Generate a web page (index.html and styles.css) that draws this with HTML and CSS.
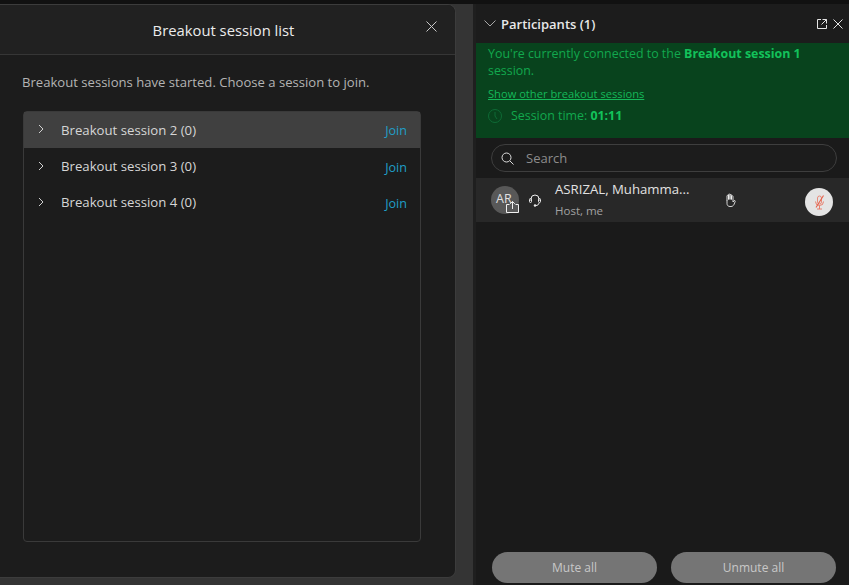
FILE: index.html
```html
<!DOCTYPE html>
<html lang="en">
<head>
    <meta charset="UTF-8">
    <meta name="viewport" content="width=device-width, initial-scale=1.0">
    <title>Breakout session list</title>
    <link rel="stylesheet" href="styles.css">
</head>
<body>
    <div class="app">
        <div class="left-side">
            <div class="dialog">
                <div class="dialog-head">
                    <h2>Breakout session list</h2>
                    <button class="dialog-close" aria-label="Close">
                        <svg width="11" height="11" viewBox="0 0 11 11"><path d="M.5.5l10 10M10.500.5l-10 10" stroke="#c8c8c8" fill="none"/></svg>
                    </button>
                </div>
                <div class="dialog-body">
                    <p class="intro">Breakout sessions have started. Choose a session to join.</p>
                    <div class="session-list">
                        <div class="session-row active">
                            <svg class="chev" width="6" height="10" viewBox="0 0 6 10"><path d="M1 1l4 4-4 4" stroke="#d0d0d0" fill="none"/></svg>
                            <span class="session-name">Breakout session 2 (0)</span>
                            <a class="join">Join</a>
                        </div>
                        <div class="session-row">
                            <svg class="chev" width="6" height="10" viewBox="0 0 6 10"><path d="M1 1l4 4-4 4" stroke="#d0d0d0" fill="none"/></svg>
                            <span class="session-name">Breakout session 3 (0)</span>
                            <a class="join">Join</a>
                        </div>
                        <div class="session-row">
                            <svg class="chev" width="6" height="10" viewBox="0 0 6 10"><path d="M1 1l4 4-4 4" stroke="#d0d0d0" fill="none"/></svg>
                            <span class="session-name">Breakout session 4 (0)</span>
                            <a class="join">Join</a>
                        </div>
                    </div>
                </div>
            </div>
        </div>

        <div class="participants">
            <div class="panel-head">
                <svg width="12" height="7" viewBox="0 0 12 7"><path d="M.5.5L6 6 11.5.5" stroke="#a8a8a8" fill="none"/></svg>
                <span class="panel-title">Participants (1)</span>
                <svg class="popout" width="10" height="10" viewBox="0 0 10 10"><path d="M4 .5H.5v9h9V6M5.500.5h4v4M9.500.5L4.500 5.500" stroke="#e4e4e4" fill="none"/></svg>
                <svg width="10" height="10" viewBox="0 0 10 10"><path d="M.5.5l9 9M9.500.5l-9 9" stroke="#e4e4e4" fill="none"/></svg>
            </div>
            <div class="banner">
                <p>You're currently connected to the <b>Breakout session 1</b> session.</p>
                <a class="banner-link">Show other breakout sessions</a>
                <div class="timer">
                    <svg width="14" height="14" viewBox="0 0 14 14"><circle cx="7" cy="7" r="6.500" stroke="#0f6b36" fill="none"/><path d="M7 3v4l2 3" stroke="#0f6b36" fill="none"/></svg>
                    <span>Session time: <b>01:11</b></span>
                </div>
            </div>
            <div class="search">
                <svg width="13" height="13" viewBox="0 0 13 13"><circle cx="5.500" cy="5.500" r="4.500" stroke="#dcdcdc" fill="none"/><path d="M9 9l3.500 3.500" stroke="#dcdcdc" fill="none"/></svg>
                <span>Search</span>
            </div>
            <div class="person">
                <div class="avatar">
                    <span class="initials">AR</span>
                    <svg class="share-badge" width="13" height="13" viewBox="0 0 13 13"><path d="M3.500 4.500H.5v8h12v-8h-3" stroke="#f0f0f0" fill="#585858"/><path d="M6.500 9V1.500M4.200 3.800l2.300-2.300 2.300 2.300" stroke="#f0f0f0" fill="none"/></svg>
                </div>
                <svg class="headset" width="12" height="13" viewBox="0 0 12 13"><path d="M2 7V5a4 4 0 0 1 8 0v2" stroke="#ececec" fill="none"/><rect x=".5" y="4.500" width="2" height="4" rx="1" stroke="#ececec" fill="none"/><rect x="9.500" y="4.500" width="2" height="4" rx="1" stroke="#ececec" fill="none"/><path d="M10 9c0 1.500-1.500 2.500-3 2.500" stroke="#ececec" fill="none"/><circle cx="6" cy="11.500" r="1.200" fill="#ececec"/></svg>
                <div class="person-text">
                    <div class="person-name">ASRIZAL, Muhamma...</div>
                    <div class="person-role">Host, me</div>
                </div>
                <svg class="hand" width="12" height="14" viewBox="0 0 12 14"><path d="M3 7.500V3a.75.75 0 0 1 1.500 0v3.500M4.500 6.500V1.750a.75.75 0 0 1 1.500 0V6.500M6 6.500V2.250a.75.75 0 0 1 1.500 0V6.500M7.500 6.500V3.500a.75.75 0 0 1 1.500 0V9l1-1.200c.6-.7 1.600 0 1.200.7L10 11.500c-.7 1.200-1.500 2-3 2H6c-2 0-3-1.300-3-3V7" stroke="#f4f4f4" stroke-width=".85" fill="none"/></svg>
                <div class="mic-btn">
                    <svg width="11" height="15" viewBox="0 0 11 15"><rect x="3.500" y="1" width="4" height="8" rx="2" stroke="#e8735f" stroke-width=".8" fill="none"/><path d="M1.500 6.500a4 4 0 0 0 8 0M5.500 10.500V14M3 14h5" stroke="#e8735f" stroke-width=".9" fill="none"/><path d="M9.500.5L2 12.500" stroke="#e4604a" stroke-width="1.100" fill="none"/></svg>
                </div>
            </div>
            <div class="panel-foot">
                <button class="pill">Mute all</button>
                <button class="pill">Unmute all</button>
            </div>
        </div>
    </div>
</body>
</html>
```

FILE: styles.css
```css
* {
    box-sizing: border-box;
}

html, body {
    height: 100%;
}

body {
    margin: 0;
    font-family: "Open Sans", "Noto Sans", sans-serif;
    background-color: #111111;
    overflow: hidden;
}

.app {
    display: flex;
    height: 585px;
    padding-top: 4px;
}

.left-side {
    width: 476px;
    padding-right: 17px;
    padding-bottom: 7px;
    border-right: 3px solid #1f1f1f;
    background-color: #343434;
    display: flex;
    flex-direction: column;
}

.dialog {
    flex: 1;
    display: flex;
    flex-direction: column;
    background-color: #1c1c1c;
    border: 1px solid #3c3c3c;
    border-left: none;
    border-radius: 0 8px 8px 0;
}

.dialog-head {
    height: 50px;
    display: flex;
    align-items: center;
    justify-content: center;
    position: relative;
    background-color: #212121;
    border-bottom: 1px solid #363636;
    border-radius: 0 8px 0 0;
}

.dialog-head h2 {
    margin: 0 8px 0 0;
    font-size: 14.8px;
    font-weight: 400;
    color: #ececec;
}

.dialog-close {
    position: absolute;
    right: 18px;
    top: 16px;
    padding: 0;
    width: 11px;
    height: 11px;
    display: flex;
    background: none;
    border: none;
}

.dialog-body {
    flex: 1;
    display: flex;
    flex-direction: column;
    padding: 0 34px 35px 22px;
}

.intro {
    margin: 18px 0 20px;
    font-size: 13.1px;
    line-height: 18px;
    color: #b4b4b4;
}

.session-list {
    flex: 1;
    border: 1px solid #3a3a3a;
    border-radius: 4px;
    margin-left: 1px;
}

.session-row {
    height: 36px;
    display: flex;
    align-items: center;
    padding: 0 13px 0 14px;
    font-size: 13.2px;
    color: #d6d6d6;
}

.session-row.active {
    margin-bottom: 1px;
    padding-top: 1px;
    background-color: #404040;
}

.chev {
    margin-top: -3px;
}

.session-name {
    flex: 1;
    margin-left: 17px;
    margin-top: -2px;
}

.join {
    color: #1f9fc8;
    font-size: 12.6px;
}

.participants {
    flex: 1;
    display: flex;
    flex-direction: column;
    background-color: #1a1a1a;
    height: 581px;
}

.panel-head {
    height: 39px;
    display: flex;
    align-items: center;
    padding: 0 6px 0 8px;
    background-color: #1c1c1c;
}

.panel-title {
    flex: 1;
    margin-left: 5px;
    font-size: 13px;
    font-weight: 600;
    color: #e8e8e8;
}

.popout {
    margin-right: 6px;
}

.banner {
    height: 95px;
    padding: 2px 12px 0;
    background-color: #08431d;
    color: #12a84e;
    font-size: 12.4px;
    line-height: 17px;
}

.banner p {
    margin: 0;
}

.banner b {
    color: #13c25b;
    font-weight: 700;
}

.banner-link {
    display: block;
    margin-top: 6px;
    font-size: 11.15px;
    color: #15b85a;
    text-decoration: underline;
}

.timer {
    display: flex;
    align-items: center;
    gap: 9px;
    margin-top: 5px;
}

.search {
    height: 28px;
    margin: 6px 12px 6px 15px;
    padding-left: 9px;
    display: flex;
    align-items: center;
    gap: 12px;
    border: 1px solid #3e3e3e;
    border-radius: 14px;
    background-color: #1c1c1c;
    font-size: 13px;
    color: #8c8c8c;
}

.person {
    height: 44px;
    display: flex;
    align-items: center;
    padding: 0 16px 0 15px;
    background-color: #282828;
}

.avatar {
    width: 28px;
    height: 28px;
    position: relative;
    border-radius: 50%;
    background-color: #585858;
    color: #e0e0e0;
    font-size: 12.5px;
    line-height: 25px;
    padding-left: 5px;
}

.share-badge {
    position: absolute;
    right: 0;
    bottom: 1px;
}

.headset {
    margin-left: 10px;
}

.person-text {
    width: 169px;
    margin-left: 14px;
}

.person-name {
    margin-top: -2px;
    font-size: 13.2px;
    line-height: 18px;
    color: #e2e2e2;
}

.person-role {
    margin-top: 5px;
    font-size: 11.5px;
    line-height: 15px;
    color: #a2a2a2;
}

.mic-btn {
    width: 28px;
    height: 28px;
    margin-top: 4px;
    margin-left: auto;
    display: flex;
    align-items: center;
    justify-content: center;
    border-radius: 50%;
    background-color: #e4e4e4;
}

.panel-foot {
    margin-top: auto;
    display: flex;
    gap: 14px;
    padding: 0 13px 2px 16px;
}

.pill {
    flex: 1;
    height: 31px;
    padding: 0;
    border: none;
    border-radius: 16px;
    background-color: #757575;
    color: #c8c8c8;
    font-family: inherit;
    font-size: 12px;
}
```
